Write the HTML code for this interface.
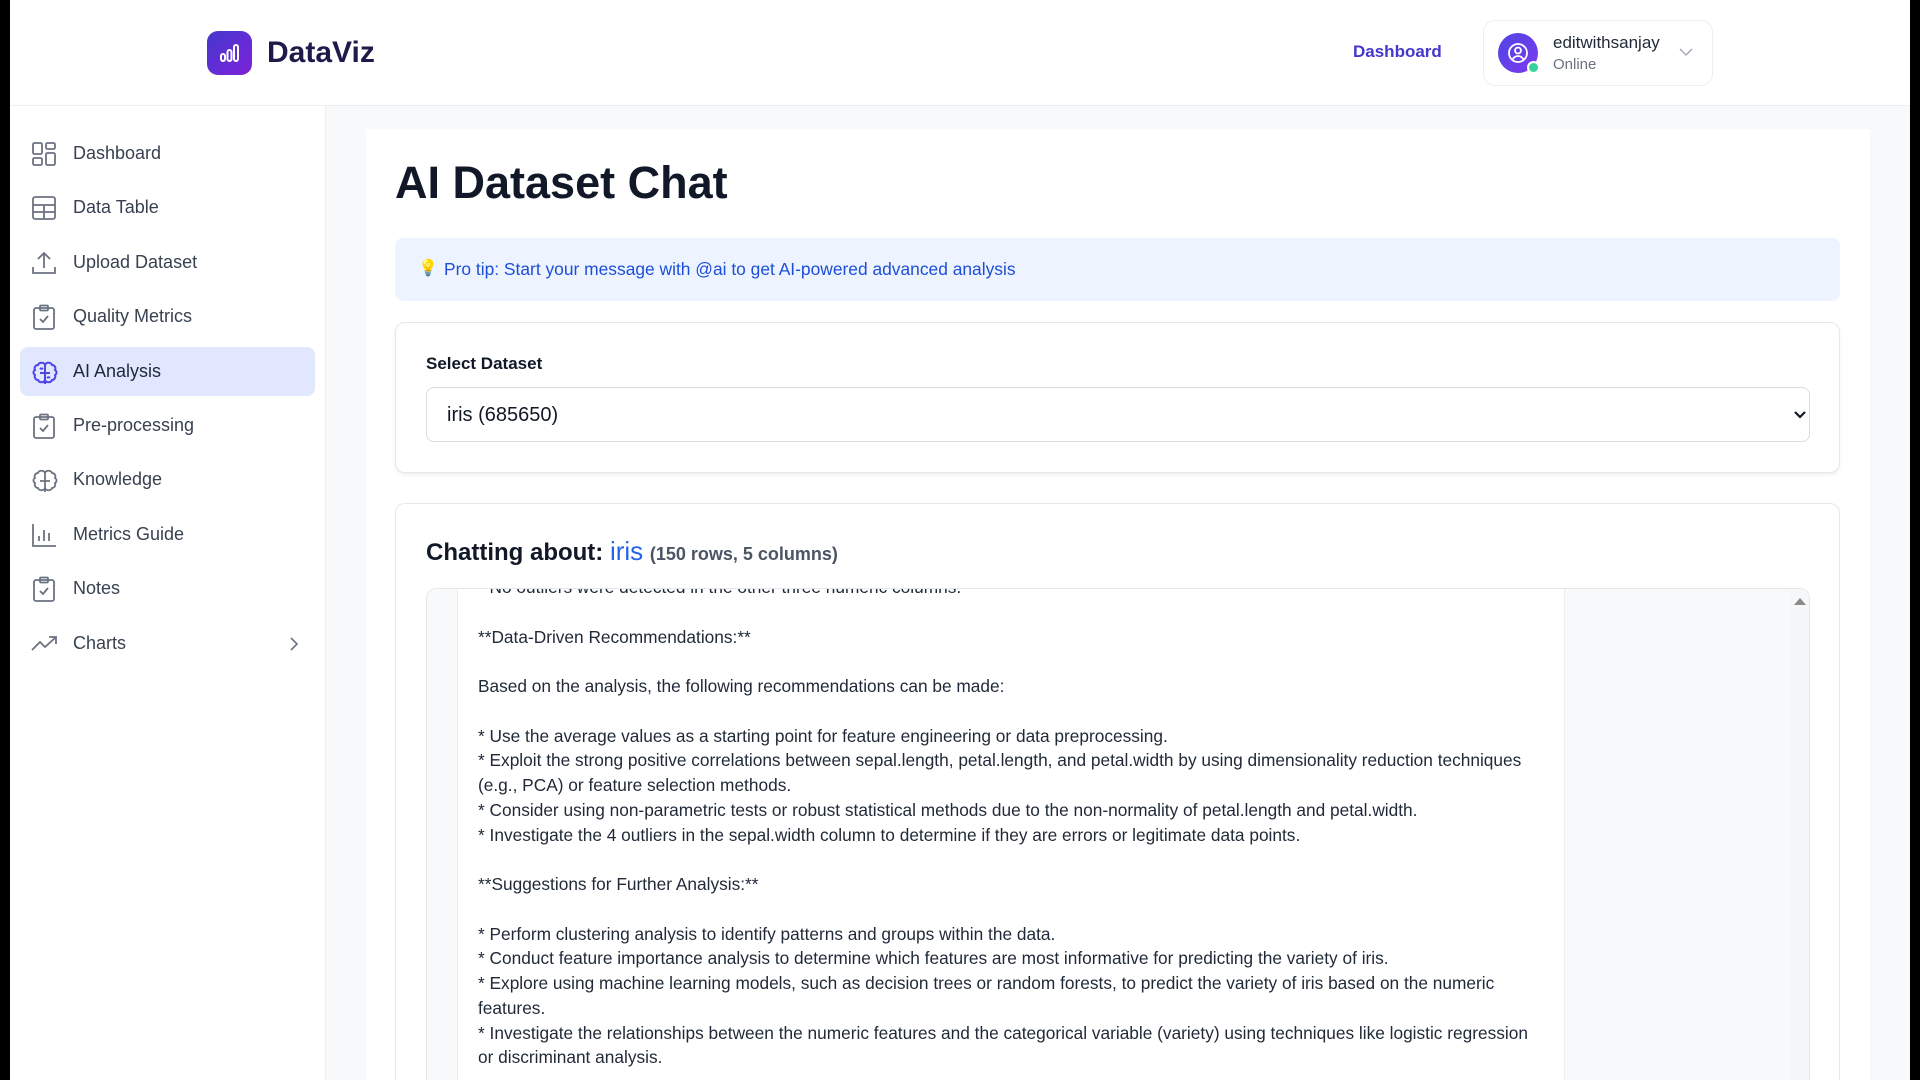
<!DOCTYPE html>
<html><head><meta charset="utf-8">
<style>
*{margin:0;padding:0;box-sizing:border-box}
html,body{width:1920px;height:1080px;overflow:hidden}
body{background:#000;font-family:"Liberation Sans",Arial,sans-serif;position:relative}
.abs{position:absolute}
#page{position:absolute;left:10px;top:0;width:1900px;height:1080px;background:#f8f9fb}
.hdr{position:absolute;left:10px;top:0;width:1900px;height:106px;background:#fff;border-bottom:1px solid #eceef2}
.side{position:absolute;left:10px;top:106px;width:316px;height:974px;background:#fff;border-right:1px solid #eceef2}
.nav{position:absolute;left:20px;width:295px;height:49px;border-radius:8px;display:flex;align-items:center;font-size:18px;color:#374151}
.nav svg{position:absolute;left:11px;top:12px}
.nav span{position:absolute;left:53px}
.nav.act{background:#e0e7ff}
.panel{position:absolute;left:366px;top:129px;width:1504px;height:951px;background:#fff}
.card{position:absolute;left:395px;width:1445px;background:#fff;border:1px solid #e5e7eb;border-radius:10px;box-shadow:0 2px 4px rgba(0,0,0,.06)}
.msg div{height:24.75px;line-height:24.75px;white-space:nowrap}
</style></head><body>
<div id="page"></div>
<div class="hdr"></div>
<div class="abs" style="left:207px;top:31px;width:45px;height:44px;border-radius:11px;background:linear-gradient(135deg,#4338ca,#6d28d9 70%,#7e22ce)">
<svg width="45" height="44" viewBox="0 0 45 44"><g fill="none" stroke="#fff" stroke-width="2"><rect x="14" y="23" width="4" height="7" rx="2"/><rect x="20.5" y="19" width="4" height="11" rx="2"/><rect x="27" y="14" width="4" height="16" rx="2"/></g></svg></div>
<div class="abs" style="left:267px;top:34px;font-size:30px;font-weight:bold;color:#1e1b4b;line-height:38px">DataViz</div>
<div class="abs" style="left:1353px;top:42px;font-size:17px;font-weight:bold;color:#4338ca;line-height:20px">Dashboard</div>
<div class="abs" style="left:1483px;top:20px;width:230px;height:66px;border:1px solid #eceef2;border-radius:12px;background:#fff"></div>
<div class="abs" style="left:1498px;top:33px;width:40px;height:40px;border-radius:50%;background:linear-gradient(135deg,#4f46e5,#7c3aed)">
<svg width="40" height="40" viewBox="0 0 40 40"><g fill="none" stroke="#fff" stroke-width="1.8"><circle cx="20" cy="20" r="9"/><circle cx="20" cy="17.5" r="3"/><path d="M14.5 26.5c1.5-2.5 3.5-3.5 5.5-3.5s4 1 5.5 3.5"/></g></svg></div>
<div class="abs" style="left:1527px;top:61px;width:13px;height:13px;border-radius:50%;background:#34d399;border:2px solid #fff"></div>
<div class="abs" style="left:1553px;top:33px;font-size:17px;color:#1f2937;line-height:20px">editwithsanjay</div>
<div class="abs" style="left:1553px;top:56px;font-size:15px;color:#6b7280;line-height:18px">Online</div>
<svg class="abs" style="left:1679px;top:48px" width="14" height="9" viewBox="0 0 14 9"><path d="M1 1l6 6 6-6" fill="none" stroke="#9ca3af" stroke-width="1.3"/></svg>

<div class="side"></div>
<div class="nav" style="top:129px"><svg width="26" height="26" viewBox="0 0 26 26" fill="none" stroke="#6b7280" stroke-width="1.8"><rect x="2" y="2" width="9" height="11" rx="1.5"/><rect x="15" y="2" width="9" height="6" rx="1.5"/><rect x="2" y="17" width="9" height="7" rx="1.5"/><rect x="15" y="12" width="9" height="12" rx="1.5"/></svg><span>Dashboard</span></div>
<div class="nav" style="top:183px"><svg width="26" height="26" viewBox="0 0 26 26" fill="none" stroke="#6b7280" stroke-width="1.8"><rect x="2" y="2" width="22" height="22" rx="2"/><path d="M2 10h22M2 17h22M13 10v14"/></svg><span>Data Table</span></div>
<div class="nav" style="top:238px"><svg width="26" height="26" viewBox="0 0 26 26" fill="none" stroke="#6b7280" stroke-width="1.8"><path d="M2 17v6h22v-6M13 18V3M7 9l6-6 6 6"/></svg><span>Upload Dataset</span></div>
<div class="nav" style="top:292px"><svg width="26" height="26" viewBox="0 0 26 26" fill="none" stroke="#6b7280" stroke-width="1.8"><rect x="3" y="4" width="20" height="21" rx="2"/><rect x="9" y="1.5" width="8" height="5" rx="1"/><path d="M9 15l3 3 5-6"/></svg><span>Quality Metrics</span></div>
<div class="nav act" style="top:347px"><svg width="28" height="28" viewBox="0 0 28 28" fill="none" stroke="#4f46e5" stroke-width="2"><path d="M14 4v21M14 6c-1-3-6-3-7 0-3 0-4 3-3 5-2 1-2 4 0 5-1 3 1 5 3 5 1 3 6 3 7 0M14 6c1-3 6-3 7 0 3 0 4 3 3 5 2 1 2 4 0 5 1 3-1 5-3 5-1 3-6 3-7 0M14 14h-5M14 14h5M9 9c1 1 2 1 3 0M16 19c1-1 2-1 3 0"/></svg><span style="color:#1f2937">AI Analysis</span></div>
<div class="nav" style="top:401px"><svg width="26" height="26" viewBox="0 0 26 26" fill="none" stroke="#6b7280" stroke-width="1.8"><rect x="3" y="4" width="20" height="21" rx="2"/><rect x="9" y="1.5" width="8" height="5" rx="1"/><path d="M9 15l3 3 5-6"/></svg><span>Pre-processing</span></div>
<div class="nav" style="top:455px"><svg width="28" height="28" viewBox="0 0 28 28" fill="none" stroke="#6b7280" stroke-width="1.8"><path d="M14 4v21M14 6c-1-3-6-3-7 0-3 0-4 3-3 5-2 1-2 4 0 5-1 3 1 5 3 5 1 3 6 3 7 0M14 6c1-3 6-3 7 0 3 0 4 3 3 5 2 1 2 4 0 5 1 3-1 5-3 5-1 3-6 3-7 0M14 14h-5M14 14h5"/></svg><span>Knowledge</span></div>
<div class="nav" style="top:510px"><svg width="26" height="26" viewBox="0 0 26 26" fill="none" stroke="#6b7280" stroke-width="1.8"><path d="M2 2v22h23M8 19v-5M13 19V8M18 19v-8"/></svg><span>Metrics Guide</span></div>
<div class="nav" style="top:564px"><svg width="26" height="26" viewBox="0 0 26 26" fill="none" stroke="#6b7280" stroke-width="1.8"><rect x="3" y="4" width="20" height="21" rx="2"/><rect x="9" y="1.5" width="8" height="5" rx="1"/><path d="M9 15l3 3 5-6"/></svg><span>Notes</span></div>
<div class="nav" style="top:619px"><svg width="28" height="26" viewBox="0 0 28 26" fill="none" stroke="#6b7280" stroke-width="1.8"><path d="M1 19l8-8 5 5 10-9M18 6h7v7"/></svg><span>Charts</span>
<svg style="left:269px;top:18px" width="10" height="14" viewBox="0 0 10 14"><path d="M2 1l6 6-6 6" fill="none" stroke="#6b7280" stroke-width="1.6"/></svg></div>

<div class="panel"></div>
<div class="abs" style="left:395px;top:156px;font-size:45px;font-weight:bold;color:#111827;line-height:54px">AI Dataset Chat</div>
<div class="abs" style="left:395px;top:238px;width:1445px;height:63px;background:#eef4ff;border-radius:8px"></div>
<div class="abs" style="left:418px;top:259px;font-size:16px;line-height:20px">💡</div>
<div class="abs" style="left:444px;top:259px;font-size:17.4px;color:#1d4ed8;line-height:20px">Pro tip: Start your message with @ai to get AI-powered advanced analysis</div>

<div class="card" style="top:322px;height:151px"></div>
<div class="abs" style="left:426px;top:354px;font-size:17px;font-weight:bold;color:#111827;line-height:20px">Select Dataset</div>
<div class="abs" style="left:426px;top:387px;width:1384px;height:55px;border:1px solid #d9dde3;border-radius:8px;background:#fff"></div>
<div class="abs" style="left:447px;top:403px;font-size:20px;color:#111827;line-height:24px">iris (685650)</div>
<svg class="abs" style="left:1793px;top:410px" width="14" height="10" viewBox="0 0 14 10"><path d="M2 2l5 5 5-5" fill="none" stroke="#111827" stroke-width="2.2"/></svg>

<div class="card" style="top:503px;height:577px;box-shadow:none;border-bottom:none;border-radius:10px 10px 0 0"></div>
<div class="abs" style="left:426px;top:537px;font-size:24px;font-weight:bold;color:#111827;line-height:28px;white-space:nowrap">Chatting about: <span style="color:#2563eb;font-weight:normal;font-size:26px">iris</span> <span style="font-size:18px;color:#4b5563">(150 rows, 5 columns)</span></div>
<div class="abs" style="left:426px;top:588px;width:1384px;height:492px;border:1px solid #e5e7eb;border-bottom:none;border-radius:10px 10px 0 0;background:#f8f9fb;overflow:hidden">
 <div class="abs" style="left:30px;top:0;width:1108px;height:500px;background:#fff;border-left:1px solid #eceef2;border-right:1px solid #eceef2"></div>
 <div class="abs" style="left:1363px;top:0;width:20px;height:500px;background:#f6f7f9"></div>
 <svg class="abs" style="left:1367px;top:8px" width="12" height="9" viewBox="0 0 12 9"><path d="M0 8L6 1l6 7z" fill="#8a8a8a"/></svg>
 <div class="msg abs" style="left:51px;top:-14px;font-size:17.3px;color:#1f2937">
  <div>* No outliers were detected in the other three numeric columns.</div>
  <div></div>
  <div>**Data-Driven Recommendations:**</div>
  <div></div>
  <div>Based on the analysis, the following recommendations can be made:</div>
  <div></div>
  <div>* Use the average values as a starting point for feature engineering or data preprocessing.</div>
  <div>* Exploit the strong positive correlations between sepal.length, petal.length, and petal.width by using dimensionality reduction techniques</div>
  <div>(e.g., PCA) or feature selection methods.</div>
  <div>* Consider using non-parametric tests or robust statistical methods due to the non-normality of petal.length and petal.width.</div>
  <div>* Investigate the 4 outliers in the sepal.width column to determine if they are errors or legitimate data points.</div>
  <div></div>
  <div>**Suggestions for Further Analysis:**</div>
  <div></div>
  <div>* Perform clustering analysis to identify patterns and groups within the data.</div>
  <div>* Conduct feature importance analysis to determine which features are most informative for predicting the variety of iris.</div>
  <div>* Explore using machine learning models, such as decision trees or random forests, to predict the variety of iris based on the numeric</div>
  <div>features.</div>
  <div>* Investigate the relationships between the numeric features and the categorical variable (variety) using techniques like logistic regression</div>
  <div>or discriminant analysis.</div>
 </div>
</div>
</body></html>
